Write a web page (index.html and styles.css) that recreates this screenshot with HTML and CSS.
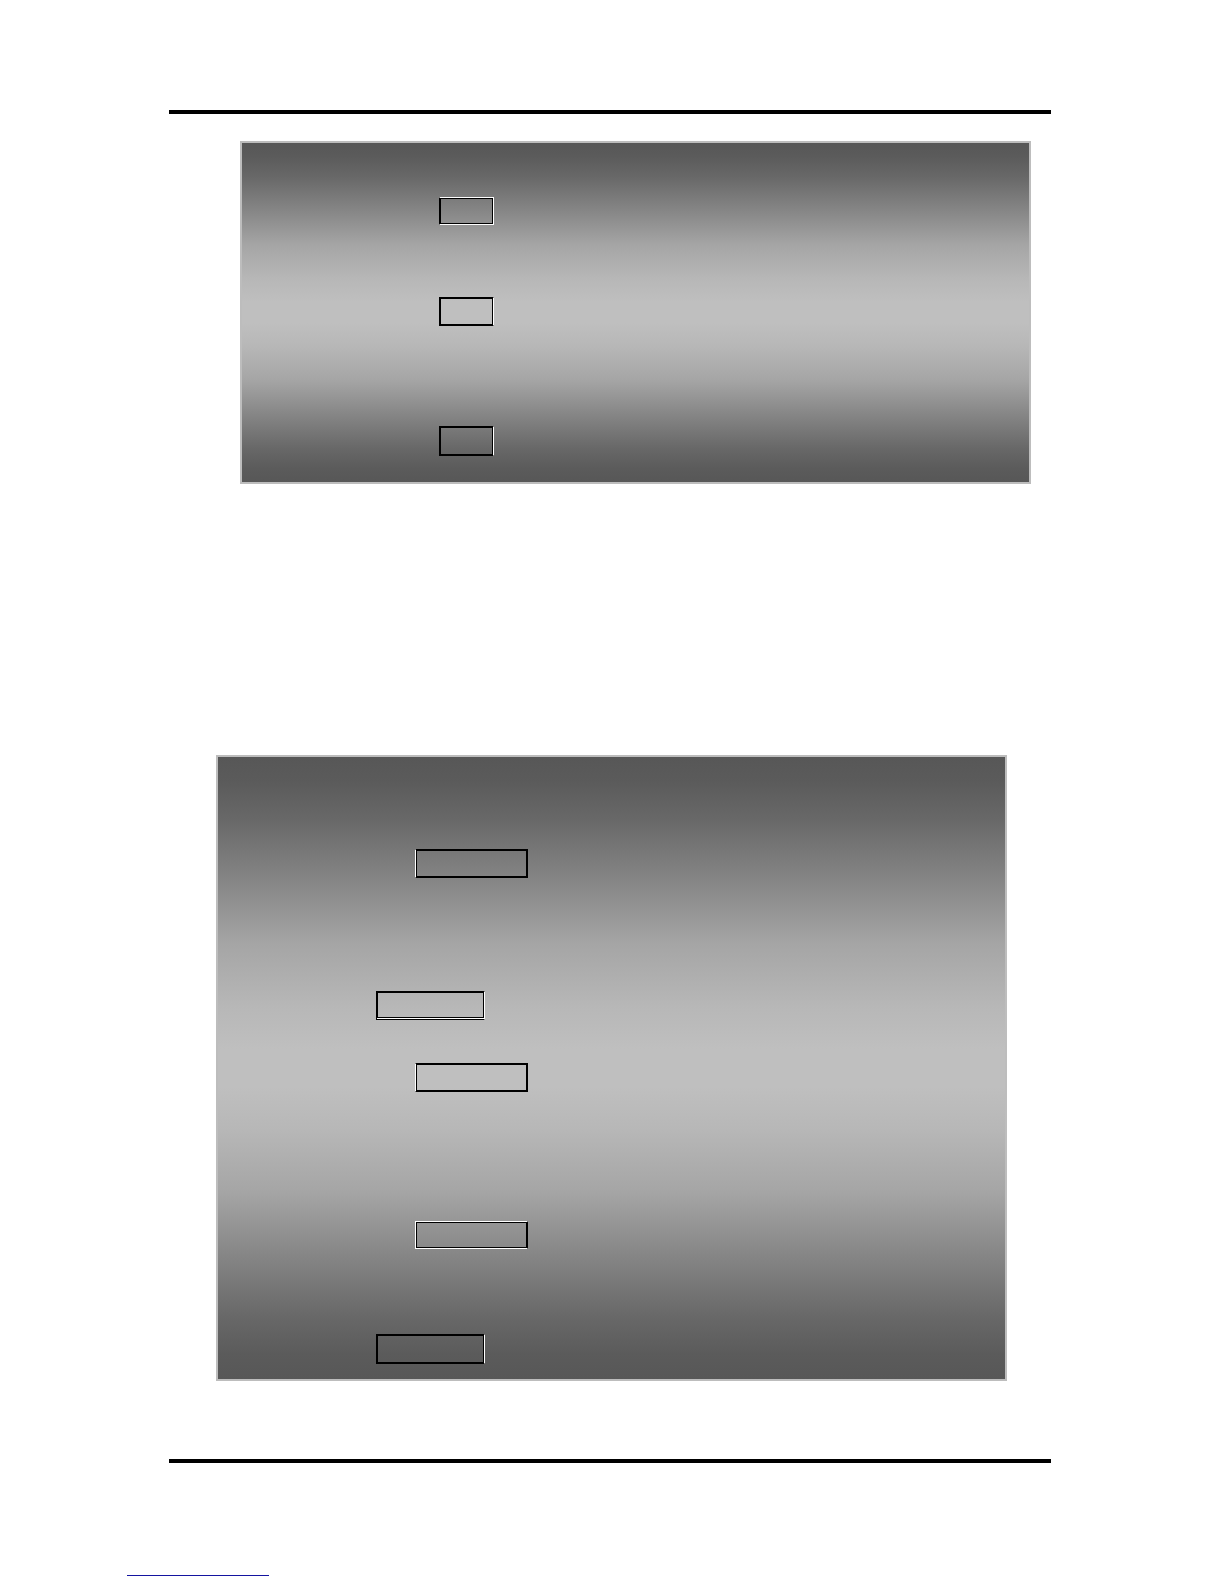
FILE: index.html
```
<!DOCTYPE html>
<html>
	<head>
		<meta charset="UTF-8">
		<title>Manual page</title>
		<link rel="stylesheet" href="styles.css">
	</head>
	<body>
		<div class="page">
			<hr class="rule">
			<div class="panel panel-top">
				<div class="box small low white-top white-right white-bottom"></div>
				<div class="box small white-right"></div>
				<div class="box small high white-right"></div>
			</div>
			<div class="panel panel-bottom">
				<div class="box wide white-left"></div>
				<div class="box outer line-bottom white-right"></div>
				<div class="box wide white-left"></div>
				<div class="box wide low white-top white-left white-bottom"></div>
				<div class="box outer high white-right"></div>
			</div>
			<hr class="rule">
		</div>
		<div class="footer">
			<div class="underline"></div>
		</div>
	</body>
</html>
```
FILE: styles.css
```
*{padding: 0;margin: 0;box-sizing: border-box;}
body{
	background: #fff;
	font-family: "Liberation Sans", sans-serif;
}
.page{
	padding: 110px 173px 0 169px;
}
.rule{
	height: 4px;
	border: 0;
	background: #000;
}
.panel{
	display: flex;
	flex-direction: column;
	border: 2px solid #bdbdbd;
	background: linear-gradient(#575757 0%, #5b5b5b 4%, #686868 10%, #868686 20%, #a5a5a5 30%, #b7b7b7 40%, #bfbfbf 47%, #bfbfbf 53%, #b7b7b7 60%, #a5a5a5 70%, #868686 80%, #686868 90%, #5b5b5b 96%, #575757 100%);
}
.panel-top{
	margin: 27px 20px 271px 71px;
	padding: 54px 0 26px;
}
.panel-bottom{
	margin: 0 44px 78px 47px;
	padding: 92px 0 15px;
}

/* double line boxes, some sides have a white outer line */
.box{
	height: 29px;
	margin-left: 197px;
	border: 1px solid #000;
	box-shadow: inset 0 0 0 1px #000;
}
.small{width: 55px;}
.wide{width: 113px;}
.outer{width: 109px;margin-left: 158px;}
.low{height: 28px;}
.high{height: 30px;}
.white-top{border-top-color: #fff;}
.white-right{border-right-color: #fff;}
.white-bottom{border-bottom-color: #fff;}
.white-left{border-left-color: #fff;}
.line-bottom{
	box-shadow: inset 0 -1px #fff, inset 0 -2px #000, inset 0 0 0 1px #000;
}

.panel-top .box:nth-child(2){margin-top: 72px;}
.panel-top .box:nth-child(3){margin-top: 100px;}
.panel-bottom .box:nth-child(2){margin-top: 113px;}
.panel-bottom .box:nth-child(3){margin-top: 43px;}
.panel-bottom .box:nth-child(4){margin-top: 129px;}
.panel-bottom .box:nth-child(5){margin-top: 85px;}

.footer{
	padding: 112px 127px 8px;
}
.underline{
	width: 142px;
	height: 1px;
	background: #1414a0;
}
```
